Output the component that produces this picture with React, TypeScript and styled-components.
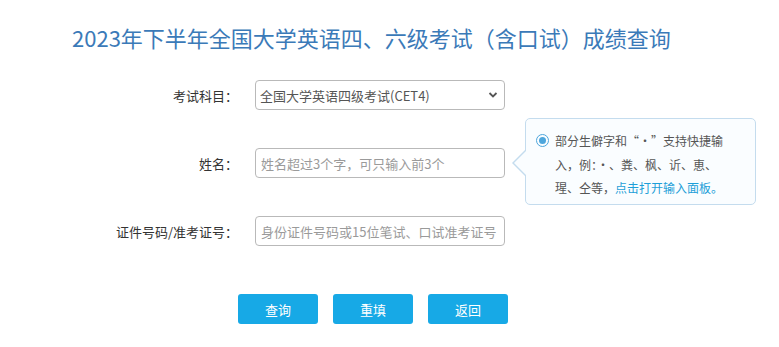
import React from "react";
import styled, { createGlobalStyle } from "styled-components";

const GlobalStyle = createGlobalStyle`
  html, body {
    margin: 0;
    padding: 0;
    background: #ffffff;
    font-family: "Noto Sans CJK SC", "Liberation Sans", sans-serif;
  }
  * { box-sizing: border-box; }
`;

const Page = styled.div`
  width: 779px;
  height: 347px;
  padding: 22px 0 0 0;
  overflow: hidden;
`;

const Title = styled.h1`
  margin: 0 0 28px 72px;
  font-size: 22px;
  line-height: 30px;
  font-weight: 400;
  color: #3b7ab8;
  letter-spacing: 0;
`;

const Form = styled.form`
  display: flex;
  flex-direction: column;
  gap: 38px;
`;

const Row = styled.div`
  position: relative;
  display: flex;
  align-items: center;
  height: 30px;
`;

const Label = styled.label`
  width: 238px;
  text-align: right;
  font-size: 13px;
  color: #333;
  margin-right: 17px;
  white-space: nowrap;
`;

const fieldBase = `
  width: 250px;
  height: 30px;
  border: 1px solid #b9b9b9;
  border-radius: 4px;
  font-family: "Noto Sans CJK SC", "Liberation Sans", sans-serif;
  font-size: 13px;
  color: #555;
  padding: 0 5px;
  background: #fff;
  outline: none;
`;

const SelectWrap = styled.div`
  position: relative;
  width: 250px;
  height: 30px;
`;

const Select = styled.select`
  ${fieldBase}
  appearance: none;
  padding-left: 4px;
`;

const Chevron = styled.svg`
  position: absolute;
  right: 7px;
  top: 11px;
  width: 10px;
  height: 8px;
  pointer-events: none;
`;

const Input = styled.input`
  ${fieldBase}
  &::placeholder {
    color: #9a9a9a;
  }
`;

const Tip = styled.div`
  position: absolute;
  left: 525px;
  top: -30px;
  width: 231px;
  height: 87px;
  border: 1px solid #c4dcee;
  border-radius: 5px;
  background: #fafdff;
  padding: 10px 0 0 10px;
  display: flex;
  gap: 6px;

  &::before,
  &::after {
    content: "";
    position: absolute;
    top: 30px;
    width: 0;
    height: 0;
    border-style: solid;
  }
  &::before {
    left: -14px;
    border-width: 14px 14px 14px 0;
    border-color: transparent #c4dcee transparent transparent;
  }
  &::after {
    left: -12px;
    top: 31px;
    border-width: 13px 13px 13px 0;
    border-color: transparent #fafdff transparent transparent;
  }
`;

const Radio = styled.span`
  flex: none;
  margin-top: 5px;
  width: 13px;
  height: 13px;
  border-radius: 50%;
  border: 1.5px solid #4ea6dc;
  display: flex;
  align-items: center;
  justify-content: center;
  &::after {
    content: "";
    width: 7px;
    height: 7px;
    border-radius: 50%;
    background: #4ea6dc;
  }
`;

const TipText = styled.p`
  margin: 0;
  width: 172px;
  font-size: 12px;
  line-height: 23.5px;
  color: #555;
`;

const Link = styled.a`
  color: #1e9fd8;
  text-decoration: none;
  cursor: pointer;
`;

const Buttons = styled.div`
  display: flex;
  gap: 15px;
  margin: 48px 0 0 238px;
`;

const Button = styled.button`
  width: 80px;
  height: 30px;
  border: none;
  border-radius: 3px;
  background: #17a9e6;
  color: #fff;
  font-family: "Noto Sans CJK SC", "Liberation Sans", sans-serif;
  font-size: 13px;
  cursor: pointer;
`;

export default function App() {
  return (
    <>
      <GlobalStyle />
      <Page>
        <Title>2023年下半年全国大学英语四、六级考试（含口试）成绩查询</Title>
        <Form onSubmit={(e) => e.preventDefault()}>
          <Row>
            <Label>考试科目：</Label>
            <SelectWrap>
              <Select defaultValue="CET4">
                <option value="CET4">全国大学英语四级考试(CET4)</option>
                <option value="CET6">全国大学英语六级考试(CET6)</option>
              </Select>
              <Chevron viewBox="0 0 10 8">
                <path d="M1.5 2 L5 5.5 L8.5 2" fill="none" stroke="#555" strokeWidth="1.8" />
              </Chevron>
            </SelectWrap>
          </Row>
          <Row>
            <Label>姓名：</Label>
            <Input placeholder="姓名超过3个字，可只输入前3个" />
            <Tip>
              <Radio />
              <TipText>
                部分生僻字和“·”支持快捷输入，例：·、粪、枫、䜣、恵、瑆、仝等，<Link>点击打开输入面板。</Link>
              </TipText>
            </Tip>
          </Row>
          <Row>
            <Label>证件号码/准考证号：</Label>
            <Input placeholder="身份证件号码或15位笔试、口试准考证号" />
          </Row>
        </Form>
        <Buttons>
          <Button>查询</Button>
          <Button>重填</Button>
          <Button>返回</Button>
        </Buttons>
      </Page>
    </>
  );
}
